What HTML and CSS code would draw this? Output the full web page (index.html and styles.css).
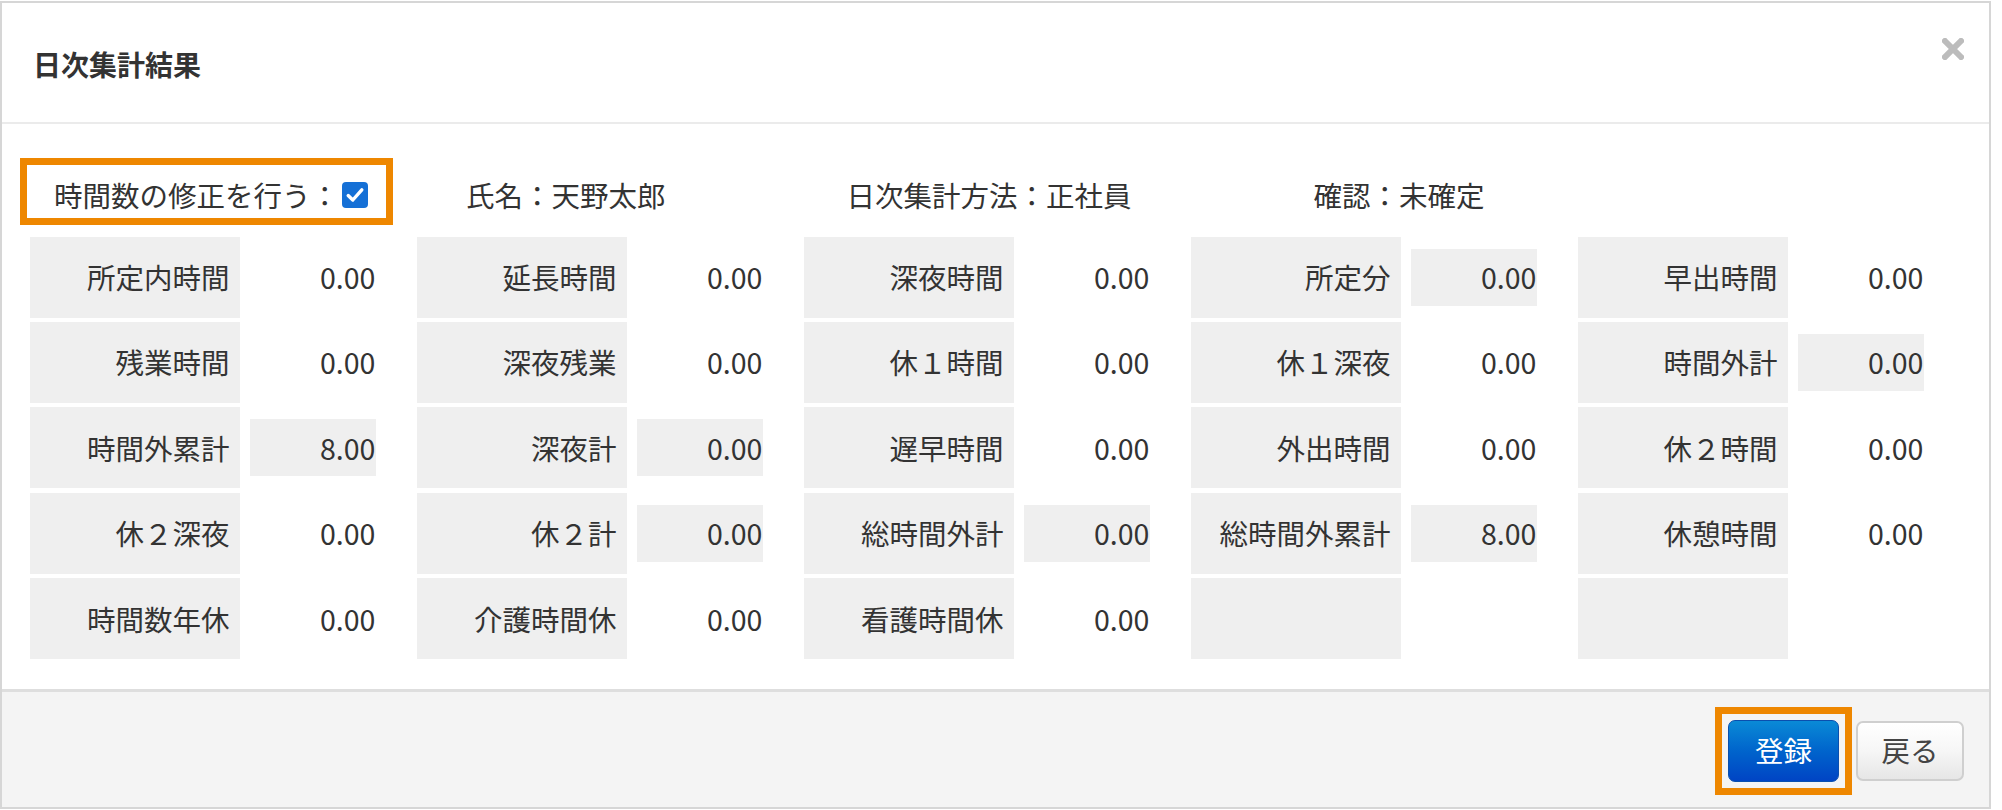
FILE: index.html
```html
<!DOCTYPE html>
<html lang="ja">
<head>
<meta charset="utf-8">
<title>日次集計結果</title>
<link rel="stylesheet" href="styles.css">
</head>
<body>
<div class="modal">
  <div class="modal-header">
    <h1 class="modal-title">日次集計結果</h1>
    <span class="close" aria-label="閉じる">
      <svg width="22" height="22" viewBox="0 0 22 22"><path d="M3 3 L19 19 M19 3 L3 19" stroke="#bcbcbc" stroke-width="6" stroke-linecap="square" fill="none"/></svg>
    </span>
  </div>
  <div class="modal-body">
    <div class="info-row">
      <label class="edit-toggle highlight">時間数の修正を行う：<span class="checkbox"><svg width="26" height="26" viewBox="0 0 26 26"><rect x="0" y="0" width="26" height="26" rx="4" fill="#1570d6"/><path d="M6.2 13.6 L10.8 18 L19.8 7.8" stroke="#fff" stroke-width="3.4" fill="none" stroke-linecap="round" stroke-linejoin="round"/></svg></span></label>
      <span class="info info-name">氏名：天野太郎</span>
      <span class="info info-method">日次集計方法：正社員</span>
      <span class="info info-status">確認：未確定</span>
    </div>
    <div class="grid">
      <div class="lbl">所定内時間</div><div class="val">0.00</div>
      <div class="lbl">延長時間</div><div class="val">0.00</div>
      <div class="lbl">深夜時間</div><div class="val">0.00</div>
      <div class="lbl">所定分</div><div class="val box">0.00</div>
      <div class="lbl">早出時間</div><div class="val">0.00</div>

      <div class="lbl">残業時間</div><div class="val">0.00</div>
      <div class="lbl">深夜残業</div><div class="val">0.00</div>
      <div class="lbl">休１時間</div><div class="val">0.00</div>
      <div class="lbl">休１深夜</div><div class="val">0.00</div>
      <div class="lbl">時間外計</div><div class="val box">0.00</div>

      <div class="lbl">時間外累計</div><div class="val box">8.00</div>
      <div class="lbl">深夜計</div><div class="val box">0.00</div>
      <div class="lbl">遅早時間</div><div class="val">0.00</div>
      <div class="lbl">外出時間</div><div class="val">0.00</div>
      <div class="lbl">休２時間</div><div class="val">0.00</div>

      <div class="lbl">休２深夜</div><div class="val">0.00</div>
      <div class="lbl">休２計</div><div class="val box">0.00</div>
      <div class="lbl">総時間外計</div><div class="val box">0.00</div>
      <div class="lbl">総時間外累計</div><div class="val box">8.00</div>
      <div class="lbl">休憩時間</div><div class="val">0.00</div>

      <div class="lbl">時間数年休</div><div class="val">0.00</div>
      <div class="lbl">介護時間休</div><div class="val">0.00</div>
      <div class="lbl">看護時間休</div><div class="val">0.00</div>
      <div class="lbl"></div><div class="val"></div>
      <div class="lbl"></div><div class="val"></div>
    </div>
  </div>
  <div class="modal-footer">
    <span class="highlight btn-wrap"><button class="btn btn-primary">登録</button></span>
    <button class="btn btn-default">戻る</button>
  </div>
</div>
</body>
</html>
```
FILE: styles.css
```css
* { box-sizing: border-box; }

html, body {
  margin: 0;
  padding: 0;
  background: #ffffff;
}

body {
  font-family: "Noto Sans CJK JP", "Liberation Sans", sans-serif;
  font-size: 28.5px;
  color: #333333;
}

.modal {
  margin-top: 1px;
  width: 1991px;
  height: 808px;
  border: 2px solid #d6d6d6;
  display: flex;
  flex-direction: column;
  background: #ffffff;
}

.modal-header {
  height: 121px;
  border-bottom: 2px solid #ebebeb;
  display: flex;
  justify-content: space-between;
  align-items: center;
  padding: 3px 25px 0 31px;
}

.modal-title {
  margin: 0;
  font-size: 28px;
  font-weight: bold;
  color: #333333;
  line-height: 1;
}

.close {
  align-self: flex-start;
  margin-top: 32px;
  width: 22px;
  height: 22px;
  display: block;
}

.close svg { display: block; }

.modal-body {
  flex: 1;
  padding-top: 34px;
}

.info-row {
  display: flex;
  align-items: center;
  margin-left: 18px;
  height: 67px;
}

.highlight {
  border: 7px solid #ee8700;
}

.edit-toggle {
  height: 67px;
  display: flex;
  align-items: center;
  padding: 7px 18px 0 27px;
  line-height: 1;
}

.checkbox {
  margin-left: 3px;
  width: 26px;
  height: 26px;
  display: block;
}

.checkbox svg { display: block; }

.info {
  line-height: 1;
  padding-top: 7px;
}

.info-name { margin-left: 73px; }
.info-method { margin-left: 181px; }
.info-status { margin-left: 182px; }

.grid {
  display: grid;
  grid-template-columns: repeat(5, 210px 157px);
  grid-auto-rows: 81px;
  column-gap: 10px;
  row-gap: 4.4px;
  margin: 11.7px 0 0 28.4px;
}

.lbl {
  background: #efefef;
  display: flex;
  align-items: center;
  justify-content: flex-end;
  padding-right: 11px;
  line-height: 1;
}

.val {
  width: 126px;
  height: 57px;
  align-self: center;
  display: flex;
  align-items: center;
  justify-content: flex-end;
  padding-right: 1px;
  line-height: 1;
}

.val.box {
  background: #efefef;
}

.modal-footer {
  height: 118px;
  border-top: 3px solid #dedede;
  background: #f4f4f4;
  display: flex;
  justify-content: flex-end;
  align-items: center;
  padding: 2px 25px 0 0;
}

.btn-wrap {
  display: block;
  padding: 6px;
}

.btn {
  font-family: "Noto Sans CJK JP", "Liberation Sans", sans-serif;
  font-size: 28.5px;
  line-height: 1;
  border-radius: 7px;
  display: block;
  cursor: pointer;
  padding: 0;
}

.btn-primary {
  width: 111px;
  height: 62px;
  color: #ffffff;
  background: linear-gradient(to bottom, #0a8ad6 0%, #0064cc 50%, #0044c4 100%);
  border: 1px solid #0a4fae;
}

.btn-default {
  margin-left: 4px;
  width: 108px;
  height: 60px;
  color: #444444;
  background: linear-gradient(to bottom, #ffffff 0%, #f6f6f6 50%, #e6e6e6 100%);
  border: 2px solid #cfcfcf;
}
```
